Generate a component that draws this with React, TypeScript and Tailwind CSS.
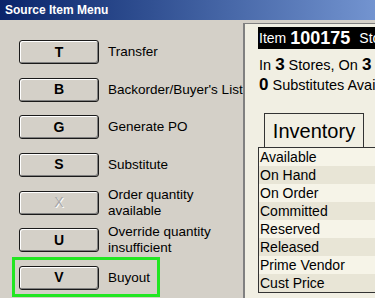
import React from 'react';

interface MenuItem {
  key: string;
  label: string[];
  disabled?: boolean;
  highlight?: boolean;
}

const menuItems: MenuItem[] = [
  { key: 'T', label: ['Transfer'] },
  { key: 'B', label: ["Backorder/Buyer's List"] },
  { key: 'G', label: ['Generate PO'] },
  { key: 'S', label: ['Substitute'] },
  { key: 'X', label: ['Order quantity', 'available'], disabled: true },
  { key: 'U', label: ['Override quantity', 'insufficient'] },
  { key: 'V', label: ['Buyout'], highlight: true },
];

const inventoryRows = [
  'Available',
  'On Hand',
  'On Order',
  'Committed',
  'Reserved',
  'Released',
  'Prime Vendor',
  'Cust Price',
];

export default function App() {
  return (
    <div
      className="w-[375px] h-[298px] overflow-hidden bg-[#d4d0c8] flex flex-col"
      style={{ fontFamily: '"Liberation Sans", Arial, sans-serif' }}
    >
      {/* Title Bar */}
      <div className="h-[20px] shrink-0 flex items-center pl-[5px] bg-gradient-to-r from-[#0a246a] to-[#7394d0]">
        <span className="text-white font-bold text-[12px] leading-none">Source Item Menu</span>
      </div>

      <div className="flex flex-1 min-h-0">
        {/* Menu Buttons */}
        <div className="w-[243px] shrink-0 overflow-hidden">
          <div className="flex flex-col gap-[13.67px] pt-[20px] pl-[19px]">
            {menuItems.map((item) => (
              <div key={item.key} className="relative flex items-center h-[24px] w-[300px]">
                {item.highlight && (
                  <div className="absolute left-[-7px] top-[-9px] w-[148px] h-[40px] border-[3px] border-[#22e622]" />
                )}
                <div className="w-[80px] h-[24px] shrink-0 flex items-center justify-center rounded-[3px] border border-[#1a1a1a] bg-[#d4d0c8] shadow-[inset_1px_1px_0_#ffffff,inset_-1px_-1px_0_#808080]">
                  {item.disabled ? (
                    <span className="text-[14px] text-[#a8a8a8] [text-shadow:1px_1px_0_#ffffff]">X</span>
                  ) : (
                    <span className="text-[14px] font-bold text-black">{item.key}</span>
                  )}
                </div>
                <div className="ml-[9px] text-[13.5px] leading-[16px] text-black whitespace-nowrap">
                  {item.label.map((line) => (
                    <div key={line}>{line}</div>
                  ))}
                </div>
              </div>
            ))}
          </div>
        </div>

        {/* Item Panel */}
        <div className="flex-1 min-w-0 mt-[3px] border-l-2 border-t border-[#808080] bg-[#f1efe3] overflow-hidden">
          <div className="pl-[13px] pt-[3px]">
            <div className="h-[22px] bg-black text-white flex items-center pl-[1px] whitespace-nowrap overflow-hidden">
              <span className="text-[14px]">Item</span>
              <span className="text-[18px] font-bold ml-[4px]">100175</span>
              <span className="text-[14px] ml-[9px]">Sto</span>
            </div>
            <div className="mt-[7px] text-[14.5px] leading-[18px] text-black whitespace-nowrap pl-[1px]">
              In <span className="text-[17px] font-bold">3</span> Stores, On{' '}
              <span className="text-[17px] font-bold">3</span>
            </div>
            <div className="mt-[2px] text-[14.5px] leading-[18px] text-black whitespace-nowrap pl-[1px]">
              <span className="text-[17px] font-bold">0</span> Substitutes Avai
            </div>

            {/* Inventory Tab */}
            <div className="mt-[19px] ml-[6px] w-[100px] h-[34px] border border-b-0 border-[#333333] flex items-center justify-center">
              <span className="text-[20px] text-black">Inventory</span>
            </div>
            <div className="w-[200px] border border-[#333333]">
              {inventoryRows.map((row, i) => (
                <div
                  key={row}
                  className={`h-[18px] flex items-center pl-[1px] text-[14px] text-black ${
                    i % 2 === 0 ? 'bg-[#f6f4e8]' : 'bg-[#e8e5d6]'
                  }`}
                >
                  {row}
                </div>
              ))}
            </div>
          </div>
        </div>
      </div>
    </div>
  );
}
